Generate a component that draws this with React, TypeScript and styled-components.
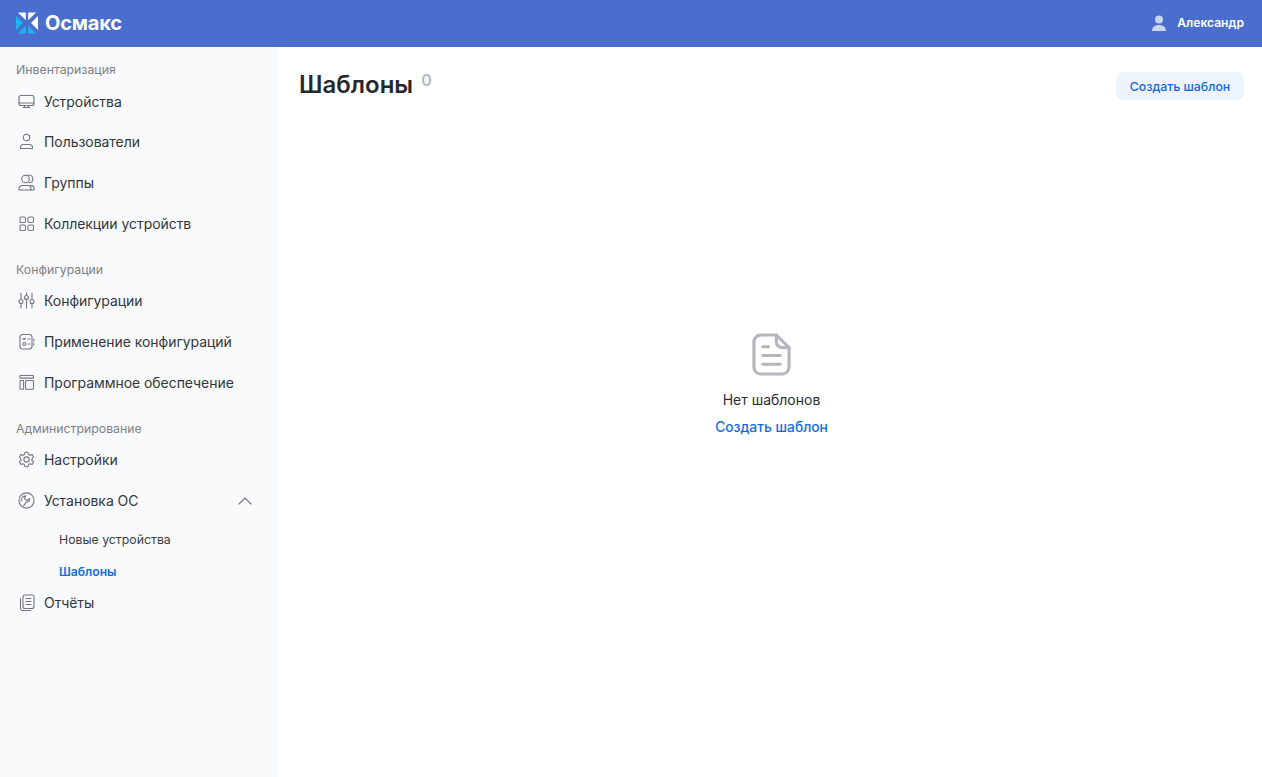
import React from "react";
import styled, { createGlobalStyle } from "styled-components";

const Global = createGlobalStyle`
  html, body { margin: 0; padding: 0; height: 100%; background: #fff; }
  body { font-family: Inter, "Liberation Sans", sans-serif; color: #26282c; }
  #root { height: 100%; }
`;

const Page = styled.div`
  display: flex;
  flex-direction: column;
  height: 777px;
  overflow: hidden;
`;

const Header = styled.header`
  flex: none;
  height: 47px;
  background: #4b6dce;
  display: flex;
  align-items: center;
  justify-content: space-between;
  padding: 0 18px 2px 16px;
  box-sizing: border-box;
`;

const Brand = styled.div`
  display: flex;
  align-items: center;
  gap: 7px;
  color: #fff;
  font-size: 20px;
  font-weight: 700;
  letter-spacing: -0.2px;
`;

const UserBox = styled.div`
  display: flex;
  align-items: center;
  gap: 10px;
  color: #fff;
  font-size: 12.1px;
  font-weight: 600;
`;

const Body = styled.div`
  flex: 1;
  display: flex;
  min-height: 0;
`;

const Sidebar = styled.nav`
  flex: none;
  width: 277px;
  background: #f9fafc;
  padding-top: 16px;
  box-sizing: border-box;
`;

const SectionTitle = styled.div<{ $gap?: number }>`
  height: 14px;
  line-height: 14px;
  margin: ${(p) => p.$gap ?? 0}px 0 4px 16px;
  font-size: 12.3px;
  color: #7d8187;
`;

const NavItem = styled.div`
  height: 40.67px;
  display: flex;
  align-items: center;
  padding: 0 25px 0 18px;
  gap: 9px;
  font-size: 14px;
  letter-spacing: -0.05px;
  color: #33363b;
  svg { flex: none; }
`;

const NavLabel = styled.span`
  flex: 1;
`;

const SubItem = styled.div<{ $active?: boolean }>`
  height: 32px;
  display: flex;
  align-items: center;
  padding-left: 59px;
  font-size: ${(p) => (p.$active ? 12.1 : 12.3)}px;
  font-weight: ${(p) => (p.$active ? 600 : 400)};
  color: ${(p) => (p.$active ? "#0f6fe0" : "#3b3e43")};
`;

const SubList = styled.div`
  margin: 3px 0 -6px;
`;

const Main = styled.main`
  flex: 1;
  min-width: 0;
  display: flex;
  flex-direction: column;
  padding: 25px 18px 0 22px;
`;

const TitleRow = styled.div`
  display: flex;
  align-items: flex-start;
  justify-content: space-between;
`;

const TitleWrap = styled.div`
  display: flex;
  align-items: flex-start;
  gap: 8px;
`;

const Title = styled.h1`
  margin: 0;
  font-size: 24px;
  line-height: 26px;
  font-weight: 600;
  color: #26282c;
`;

const Count = styled.span`
  font-size: 16px;
  line-height: 16px;
  font-weight: 600;
  color: #b4b7bc;
`;

const CreateButton = styled.button`
  height: 28px;
  width: 128px;
  border: none;
  border-radius: 7px;
  background: #edf4fd;
  color: #1069d8;
  font-family: inherit;
  font-size: 12.3px;
  font-weight: 500;
  padding: 0;
`;

const Empty = styled.div`
  display: flex;
  flex-direction: column;
  align-items: center;
  margin-top: 233px;
`;

const EmptyText = styled.div`
  margin-top: 15px;
  font-size: 14px;
  line-height: 18px;
  color: #2c2e32;
`;

const EmptyLink = styled.a`
  margin-top: 9px;
  font-size: 13.8px;
  line-height: 18px;
  font-weight: 500;
  color: #0f6fe0;
  text-decoration: none;
`;

const Ico = ({ children }: { children: React.ReactNode }) => (
  <svg width="17" height="17" viewBox="0 0 17 17" fill="none" stroke="#74777d" strokeWidth="1.1" strokeLinecap="round" strokeLinejoin="round">
    {children}
  </svg>
);

const Logo = () => (
  <svg width="22" height="22" viewBox="0 0 22 22">
    <path d="M2 0.5H9.8V8.3Z" fill="#fff" />
    <path d="M20 0.5H12.2V8.3Z" fill="#fff" />
    <path d="M0 4 7 11 0 18Z" fill="#1cb6ee" />
    <path d="M22 4 15 11 22 18Z" fill="#fff" />
    <path d="M2 21.5H9.8V13.7Z" fill="#1cb6ee" />
    <path d="M20 21.5H12.2V13.7Z" fill="#1cb6ee" />
  </svg>
);

const UserIcon = () => (
  <svg width="16" height="16" viewBox="0 0 16 16" fill="#c9d6f3">
    <circle cx="8" cy="4.4" r="4" />
    <path d="M1 16c0-3.6 2.6-6 7-6s7 2.4 7 6Z" />
  </svg>
);

const items = {
  monitor: (
    <Ico>
      <rect x="1" y="2.5" width="15" height="10" rx="2" />
      <path d="M1 10h15M6.5 12.5v2M10.5 12.5v2M5 14.5h7" />
    </Ico>
  ),
  user: (
    <Ico>
      <circle cx="8.5" cy="4.5" r="3.2" />
      <path d="M2.5 15.5v-1c0-1.7 1.3-3 3-3h6c1.7 0 3 1.3 3 3v1Z" />
    </Ico>
  ),
  users: (
    <Ico>
      <circle cx="7.5" cy="5" r="3.8" />
      <path d="M1 16v-1.2c0-1.9 1.5-3.3 3.3-3.3h5.4c1.8 0 3.3 1.4 3.3 3.3V16Z" />
      <path d="M9.2 1.6c.5-.4 1.2-.6 1.9-.6 2.1 0 3.7 1.8 3.7 4s-1.6 3.8-3.7 3.8M12.4 11.6h.6c1.8 0 3.2 1.4 3.2 3.2V16H13" />
    </Ico>
  ),
  grid: (
    <Ico>
      <rect x="2" y="2" width="5.5" height="5.5" rx="1.2" />
      <rect x="10" y="2" width="5.5" height="5.5" rx="1.2" />
      <rect x="2" y="10" width="5.5" height="5.5" rx="1.2" />
      <rect x="10" y="10" width="5.5" height="5.5" rx="1.2" />
    </Ico>
  ),
  sliders: (
    <Ico>
      <path d="M3 1v6M8.5 1v2M14 1v6M3 12v4M8.5 8v8M14 12v4" />
      <circle cx="3" cy="9.5" r="2" />
      <circle cx="8.5" cy="5.5" r="2" />
      <circle cx="14" cy="9.5" r="2" />
    </Ico>
  ),
  checklist: (
    <Ico>
      <rect x="2" y="1.5" width="12" height="14.5" rx="2.5" />
      <path d="M15.8 6v2M15.8 10v2M5 5.5l1 1 1.5-1.5M10 6h2M10 11h2" />
      <rect x="5" y="9.7" width="2.6" height="2.6" rx=".6" />
    </Ico>
  ),
  layout: (
    <Ico>
      <rect x="2" y="1.5" width="13.5" height="2.6" rx=".4" />
      <rect x="2" y="6.5" width="3.6" height="8.8" rx=".6" />
      <rect x="7.6" y="6.5" width="7.9" height="8.8" rx=".6" />
    </Ico>
  ),
  gear: (
    <Ico>
      <circle cx="8.5" cy="8.5" r="2.6" />
      <path d="M7 1.3h3l.6 2.1 1.4.8 2.1-.6 1.5 2.6-1.6 1.5v1.6l1.6 1.5-1.5 2.6-2.1-.6-1.4.8-.6 2.1H7l-.6-2.1-1.4-.8-2.1.6-1.5-2.6L3 9.3V7.7L1.4 6.2l1.5-2.6 2.1.6 1.4-.8Z" />
    </Ico>
  ),
  wrench: (
    <Ico>
      <circle cx="8.5" cy="8.5" r="7.6" />
      <path d="M3.2 9.3c-.4-3 1.7-5.4 4.7-5.5l-1.5 2 .9 2 2.2.4 2-1.7c.6 2-1 3.6-3 3.4l-3 4" />
    </Ico>
  ),
  reports: (
    <Ico>
      <rect x="5" y="1" width="11" height="13.5" rx="2" />
      <path d="M8 4.5h5M8 7.5h5M8 10.5h5" />
      <path d="M2.5 4.5v9.5c0 1.4 1.1 2.5 2.5 2.5h7.5" />
    </Ico>
  ),
};

const Chevron = () => (
  <svg width="14" height="8" viewBox="0 0 14 8" fill="none" stroke="#74777d" strokeWidth="1.1" strokeLinecap="round" strokeLinejoin="round">
    <path d="M1 7 7 1l6 6" />
  </svg>
);

const DocIcon = () => (
  <svg width="39" height="43" viewBox="0 0 40 44" fill="none" stroke="#b3b6bb" strokeWidth="3.2" strokeLinecap="round" strokeLinejoin="round">
    <path d="M25 2H9a7 7 0 0 0-7 7v26a7 7 0 0 0 7 7h22a7 7 0 0 0 7-7V15Z" />
    <path d="M25 2v7a6 6 0 0 0 6 6h7" />
    <path d="M11 14h6M11 23h18M11 32h18" />
  </svg>
);

const Nav = ({ icon, label, extra }: { icon: React.ReactNode; label: string; extra?: React.ReactNode }) => (
  <NavItem>
    {icon}
    <NavLabel>{label}</NavLabel>
    {extra}
  </NavItem>
);

export default function App() {
  return (
    <Page>
      <Global />
      <Header>
        <Brand>
          <Logo />
          Осмакс
        </Brand>
        <UserBox>
          <UserIcon />
          Александр
        </UserBox>
      </Header>
      <Body>
        <Sidebar>
          <SectionTitle>Инвентаризация</SectionTitle>
          <Nav icon={items.monitor} label="Устройства" />
          <Nav icon={items.user} label="Пользователи" />
          <Nav icon={items.users} label="Группы" />
          <Nav icon={items.grid} label="Коллекции устройств" />
          <SectionTitle $gap={19}>Конфигурации</SectionTitle>
          <Nav icon={items.sliders} label="Конфигурации" />
          <Nav icon={items.checklist} label="Применение конфигураций" />
          <Nav icon={items.layout} label="Программное обеспечение" />
          <SectionTitle $gap={19}>Администрирование</SectionTitle>
          <Nav icon={items.gear} label="Настройки" />
          <Nav icon={items.wrench} label="Установка ОС" extra={<Chevron />} />
          <SubList>
            <SubItem>Новые устройства</SubItem>
            <SubItem $active>Шаблоны</SubItem>
          </SubList>
          <Nav icon={items.reports} label="Отчёты" />
        </Sidebar>
        <Main>
          <TitleRow>
            <TitleWrap>
              <Title>Шаблоны</Title>
              <Count>0</Count>
            </TitleWrap>
            <CreateButton>Создать шаблон</CreateButton>
          </TitleRow>
          <Empty>
            <DocIcon />
            <EmptyText>Нет шаблонов</EmptyText>
            <EmptyLink>Создать шаблон</EmptyLink>
          </Empty>
        </Main>
      </Body>
    </Page>
  );
}
